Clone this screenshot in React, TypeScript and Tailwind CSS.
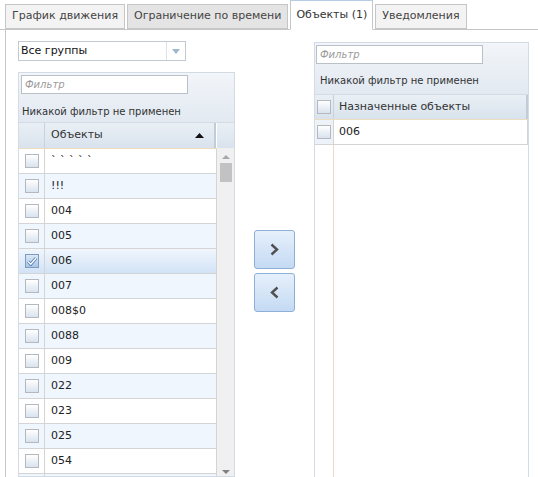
import React from "react";

const font = { fontFamily: '"DejaVu Sans", Verdana, sans-serif' };

function Checkbox({ checked = false }: { checked?: boolean }) {
  return (
    <div
      className={
        "w-[14px] h-[14px] border flex items-center justify-center " +
        (checked
          ? "border-[#7f9cc0] bg-gradient-to-b from-[#dbe8f7] to-[#a9c5e6]"
          : "border-[#b5b9bf] bg-gradient-to-b from-[#ffffff] to-[#d9e3ee]")
      }
    >
      {checked && (
        <svg width="10" height="9" viewBox="0 0 10 9">
          <path d="M1 4.5 L3.8 7.3 L9 1.2" fill="none" stroke="#4a78b0" strokeWidth="3" />
          <path d="M1 4.5 L3.8 7.3 L9 1.2" fill="none" stroke="#ffffff" strokeWidth="1.4" />
        </svg>
      )}
    </div>
  );
}

const rows = ["` ` ` ` `", "!!!", "004", "005", "006", "007", "008$0", "0088", "009", "022", "023", "025", "054", ""];

function Tab({ label, active, dark }: { label: string; active?: boolean; dark?: boolean }) {
  if (active) {
    return (
      <div className="h-[30px] px-[5px] flex items-center pt-[1px] bg-white border border-[#c6c6c6] border-t-[#b7cde6] border-b-white text-[11px] text-[#333] relative top-[1px]">
        {label}
      </div>
    );
  }
  return (
    <div
      className={
        "h-[25px] px-[6px] flex items-center border border-[#c6c6c6] text-[11px] text-[#444] " +
        (dark ? "bg-[#e4e4e4]" : "bg-[#f3f3f3]")
      }
    >
      {label}
    </div>
  );
}

export default function App() {
  return (
    <div style={font} className="w-[538px] h-[477px] overflow-hidden bg-white text-[#222]">
      {/* Tabs */}
      <div className="flex items-end gap-[2px] pl-[5px] h-[30px] border-b border-[#c6c6c6]">
        <Tab label="График движения" />
        <Tab label="Ограничение по времени" dark />
        <Tab label="Объекты (1)" active />
        <Tab label="Уведомления" />
      </div>

      {/* Content */}
      <div className="ml-[5px] border-l border-[#c6c6c6] h-[447px] flex pl-[12px] pt-[11px]">
        {/* Left column */}
        <div className="w-[217px] flex flex-col">
          <div className="w-[168px] h-[20px] border border-[#c3c9d0] flex items-center bg-white">
            <span className="pl-[2px] text-[11px] flex-1 text-[#111]">Все группы</span>
            <div className="w-[19px] h-full border-l border-[#dde2e8] flex items-center justify-center">
              <svg width="8" height="5" viewBox="0 0 8 5">
                <path d="M0 0 L8 0 L4 5 Z" fill="#9fb6cf" />
              </svg>
            </div>
          </div>

          <div className="mt-[11px] border border-[#d3dbe4] flex-1 flex flex-col overflow-hidden">
            <div className="h-[49px] bg-gradient-to-b from-[#f2f5f9] to-[#e2e9f1] pl-[2px] pt-[2px]">
              <div className="w-[167px] h-[19px] border border-[#b9c0c8] bg-white flex items-center pl-[3px]">
                <span className="text-[10px] italic text-[#9a9a9a]">Фильтр</span>
              </div>
              <div className="text-[10px] text-[#333] mt-[10px] pl-[1px]">Никакой фильтр не применен</div>
            </div>
            {/* Column header */}
            <div className="flex h-[26px] border-t border-[#d3dbe4] bg-gradient-to-b from-[#e9eff5] to-[#d9e3ed]">
              <div className="w-[26px] border-r border-[#c8d2de]" />
              <div className="w-[171px] flex items-center justify-between pl-[6px] pr-[10px] text-[11px] text-[#333] border-r-2 border-[#c3ccd6]">
                <span>Объекты</span>
                <svg width="9" height="5" viewBox="0 0 9 5">
                  <path d="M0 5 L4.5 0 L9 5 Z" fill="#111" />
                </svg>
              </div>
              <div className="flex-1 border-l border-white" />
            </div>
            {/* Body */}
            <div className="flex flex-1 overflow-hidden">
              <div className="w-[198px] flex flex-col border-t border-[#ecdcc0]">
                {rows.map((r, i) => {
                  const selected = r === "006";
                  const bg = selected
                    ? "bg-gradient-to-b from-[#f0f6fd] to-[#d2e3f6]"
                    : i % 2 === 1
                    ? "bg-[#eff6fe]"
                    : "bg-white";
                  return (
                    <div key={i} className={"flex h-[25px] shrink-0 border-b border-[#d4d4d4] " + bg}>
                      <div className="w-[26px] border-r border-[#d4d4d4] flex items-center justify-center">
                        <Checkbox checked={selected} />
                      </div>
                      <div className="flex-1 flex items-center pl-[6px] text-[11px] text-[#222] border-r border-[#d4d4d4]">
                        {r}
                      </div>
                    </div>
                  );
                })}
              </div>
              <div className="flex-1 bg-[#f0f0f0] flex flex-col items-center relative">
                <svg className="mt-[7px]" width="8" height="4" viewBox="0 0 8 4">
                  <path d="M0 4 L4 0 L8 4 Z" fill="#a8a8a8" />
                </svg>
                <div className="w-[12px] h-[19px] bg-[#c2c2c2] mt-[4px]" />
                <svg className="absolute top-[322px]" width="8" height="4" viewBox="0 0 8 4">
                  <path d="M0 0 L8 0 L4 4 Z" fill="#808080" />
                </svg>
              </div>
            </div>
          </div>
        </div>

        {/* Middle buttons */}
        <div className="w-[79px] flex flex-col items-start pl-[19px] pt-[189px] gap-[4px]">
          <button className="w-[41px] h-[39px] rounded-[3px] border border-[#8fb0d6] bg-gradient-to-b from-[#e6f0fb] to-[#c4daf3] flex items-center justify-center">
            <svg width="9" height="13" viewBox="0 0 9 13">
              <path d="M1.5 1.5 L7 6.5 L1.5 11.5" fill="none" stroke="#505050" strokeWidth="2.4" />
            </svg>
          </button>
          <button className="w-[41px] h-[39px] rounded-[3px] border border-[#8fb0d6] bg-gradient-to-b from-[#e6f0fb] to-[#c4daf3] flex items-center justify-center">
            <svg width="9" height="13" viewBox="0 0 9 13">
              <path d="M7.5 1.5 L2 6.5 L7.5 11.5" fill="none" stroke="#505050" strokeWidth="2.4" />
            </svg>
          </button>
        </div>

        {/* Right panel */}
        <div className="w-[215px] mt-[1px] border border-[#d3dbe4] border-b-0 flex flex-col">
          <div className="h-[51px] bg-gradient-to-b from-[#f2f5f9] to-[#e2e9f1] pl-[1px] pt-[2px]">
            <div className="w-[167px] h-[19px] border border-[#b9c0c8] bg-white flex items-center pl-[3px]">
              <span className="text-[10px] italic text-[#9a9a9a]">Фильтр</span>
            </div>
            <div className="text-[10px] text-[#333] mt-[9px] pl-[4px]">Никакой фильтр не применен</div>
          </div>
          <div className="flex h-[25px] border-t border-[#d3dbe4] bg-gradient-to-b from-[#e9eff5] to-[#d9e3ed]">
            <div className="w-[19px] border-r border-[#c8d2de] flex items-center justify-center">
              <Checkbox />
            </div>
            <div className="flex-1 flex items-center pl-[5px] text-[11px] text-[#333] border-r-2 border-[#c3ccd6]">
              Назначенные объекты
            </div>
          </div>
          <div className="flex-1 flex flex-col border-t border-[#ecdcc0]">
            <div className="flex h-[25px] border-b border-[#d4d4d4] bg-white">
              <div className="w-[19px] border-r border-[#d4d4d4] bg-[#eef3f9] flex items-center justify-center">
                <Checkbox />
              </div>
              <div className="flex-1 flex items-center pl-[5px] text-[11px] text-[#222] border-r border-[#d4d4d4]">
                006
              </div>
            </div>
            <div className="flex-1 flex">
              <div className="w-[19px] border-r border-[#e6dcc8]" />
              <div className="flex-1" />
            </div>
          </div>
        </div>
      </div>
    </div>
  );
}
